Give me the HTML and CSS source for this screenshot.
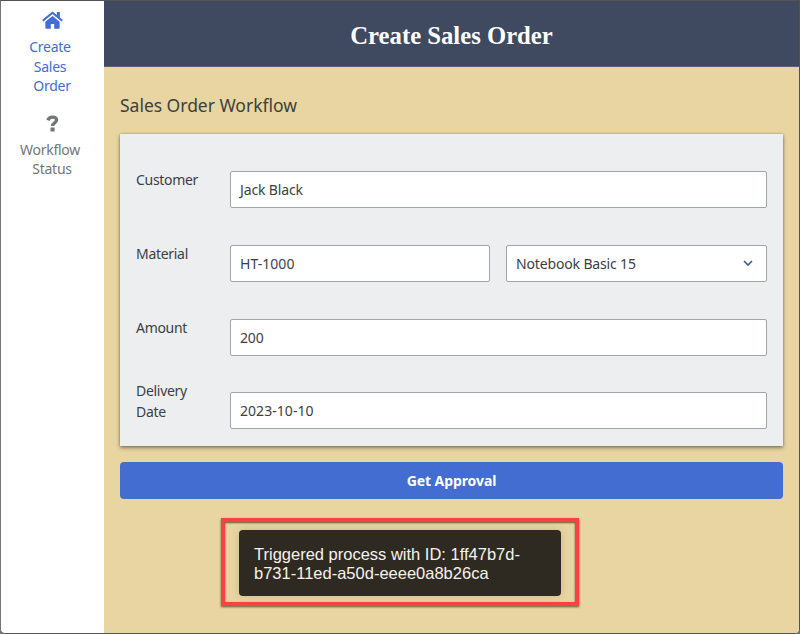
FILE: index.html
```html
<!DOCTYPE html>
<html lang="en">
<head>
<meta charset="utf-8">
<title>Create Sales Order</title>
<link rel="stylesheet" href="styles.css">
</head>
<body>
<div class="window">
  <nav class="sidebar">
    <a class="nav-item active">
      <svg class="icon home" viewBox="0 0 20 17"><path d="M10 4.6 3.2 10.2v5.6q0 1 1 1h4.2v-4.6h3.2v4.6h4.2q1 0 1-1v-5.6z"/><path d="M.7 9.2 10 1.6l9.3 7.6" fill="none" stroke="currentColor" stroke-width="2"/><path d="M14.2.8H17v6.4l-2.8-2.4z"/></svg>
      <span>Create</span><span>Sales</span><span class="last">Order</span>
    </a>
    <a class="nav-item">
      <svg class="icon help" viewBox="0 0 12 17"><path d="M1.3 5.3C2.3 3.1 3.8 2.1 6 2.1c2.4 0 4.1 1.1 4.1 3 0 2.9-4.1 2.8-4.1 6" fill="none" stroke="currentColor" stroke-width="3.4"/><path d="M4 12.6h4.1v3.9H4z"/></svg>
      <span>Workflow</span><span class="last">Status</span>
    </a>
  </nav>
  <main class="page">
    <header class="header"><h1>Create Sales Order</h1></header>
    <div class="content">
      <h2>Sales Order Workflow</h2>
      <form class="card">
        <div class="row"><label>Customer</label><div class="field"><span class="customer">Jack Black</span></div></div>
        <div class="row"><label>Material</label><div class="field"><span class="code">HT-1000</span></div>
          <div class="field select"><span class="product">Notebook Basic 15</span><svg class="chevron" viewBox="0 0 10 6"><path d="m1 1 4 4 4-4"/></svg></div></div>
        <div class="row"><label>Amount</label><div class="field"><span class="amount">200</span></div></div>
        <div class="row"><label class="two-line">Delivery<br>Date</label><div class="field"><span class="date">2023-10-10</span></div></div>
      </form>
      <div class="button"><span>Get Approval</span></div>
      <div class="highlight"><div class="toast">Triggered process with ID: 1ff47b7d-<br>b731-11ed-a50d-eeee0a8b26ca</div></div>
    </div>
  </main>
</div>
</body>
</html>
```
FILE: styles.css
```css
* { box-sizing: border-box; }
body { margin: 0; background: #777; font-family: "Noto Sans", "Open Sans", sans-serif; color: #3b3f43; }
.window { display: flex; width: 800px; height: 634px; border: 1px solid #55534f; border-left-color: #77777a; border-radius: 0 0 5px 5px; background: #fff; overflow: hidden; }
.sidebar { width: 103px; flex: none; padding-top: 10px; }
.nav-item { display: flex; flex-direction: column; align-items: center; color: #747679; font-size: 14px; line-height: 19.4px; letter-spacing: -.25px; margin-bottom: 19px; }
.nav-item span { margin-right: 5px; }
.nav-item .last { margin-right: 1px; }
.active { color: #426dd2; }
.icon { display: block; fill: currentColor; margin-right: 1px; }
.home { width: 21px; height: 18px; margin-bottom: 8.4px; }
.help { width: 13px; height: 17px; margin-bottom: 8px; }
.page { flex: 1; background: #e8d5a1; }
.header { height: 66px; background: #3f4a60; border-bottom: 1px solid #596172; display: flex; justify-content: center; align-items: center; padding-top: 4px; }
h1 { margin: 0; color: #fff; font: bold 24.7px/28px "Liberation Serif", serif; }
.content { padding: 26px 16px 0; }
h2 { margin: 0 0 16px; font-size: 17.5px; font-weight: 400; line-height: 25px; letter-spacing: -.02px; }
.card { height: 312px; padding: 37px 16px 0; background: #edeef0; box-shadow: 0 2px 4px #0006, 0 0 2px #0004; }
.row { display: flex; gap: 16px; height: 37px; margin-bottom: 36.8px; }
label { width: 78px; flex: none; margin-top: -2px; font-size: 14px; line-height: 21px; letter-spacing: -.3px; }
.two-line { margin-top: -12.5px; }
.field { flex: 1; height: 37px; border: 1px solid #a0a4ad; border-radius: 2px; background: #fff; padding: 0 9px; display: flex; align-items: center; font-size: 14px; letter-spacing: -.15px; white-space: nowrap; }
.code, .date { letter-spacing: .05px; }
.select { flex: 0 0 261px; justify-content: space-between; padding-right: 13px; }
.chevron { width: 10px; height: 6px; fill: none; stroke: #33539b; stroke-width: 1.5; }
.button { height: 37px; margin-top: 16px; border-radius: 4px; background: #436dd0; color: #fff; display: flex; align-items: center; justify-content: center; font-size: 14px; font-weight: 700; letter-spacing: -.08px; }
.highlight { width: 358px; height: 88px; margin: 19px 0 0 101px; padding: 8px 14px; border: 4px solid #fc4143; box-shadow: 0 1px 2px #0009, inset 0 1px 2px #0009; }
.toast { height: 66px; width: 322px; padding: 15px 14px 15px 15px; border-radius: 4px; background: #2f2a21; color: #f5f3ed; font: 16.5px/19px "Liberation Sans", sans-serif; box-shadow: 0 0 10px #0002; white-space: nowrap; }
```
